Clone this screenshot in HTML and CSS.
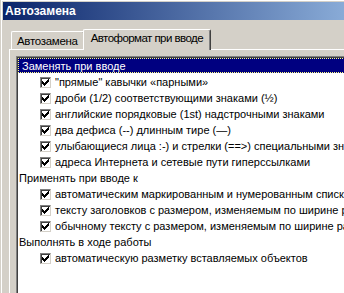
FILE: index.html
```html
<!DOCTYPE html>
<html lang="ru">
<head>
  <meta charset="UTF-8">
  <title>Автозамена</title>
  <link rel="stylesheet" href="styles.css">
</head>
<body>
  <div class="window">
    <div class="titlebar">Автозамена</div>

    <div class="tabs">
      <div class="tab">Автозамена</div>
      <div class="tab active">Автоформат при вводе</div>
    </div>

    <div class="panel">
      <div class="listbox">
        <div class="row group selected"><span class="focus">Заменять при вводе</span></div>
        <div class="row item"><span class="check"></span>"прямые" кавычки «парными»</div>
        <div class="row item"><span class="check"></span>дроби (1/2) соответствующими знаками (½)</div>
        <div class="row item"><span class="check"></span>английские порядковые (1st) надстрочными знаками</div>
        <div class="row item"><span class="check"></span>два дефиса (--) длинным тире (—)</div>
        <div class="row item"><span class="check"></span>улыбающиеся лица :-) и стрелки (==&gt;) специальными знаками</div>
        <div class="row item"><span class="check"></span>адреса Интернета и сетевые пути гиперссылками</div>
        <div class="row group">Применять при вводе к</div>
        <div class="row item"><span class="check"></span>автоматическим маркированным и нумерованным спискам</div>
        <div class="row item"><span class="check"></span>тексту заголовков с размером, изменяемым по ширине рамки</div>
        <div class="row item"><span class="check"></span>обычному тексту с размером, изменяемым по ширине рамки</div>
        <div class="row group">Выполнять в ходе работы</div>
        <div class="row item"><span class="check"></span>автоматическую разметку вставляемых объектов</div>
        <div class="row"></div>
        <div class="row"></div>
      </div>
    </div>
  </div>
</body>
</html>
```

FILE: styles.css
```css
html, body {
  margin: 0;
  width: 344px;
  height: 293px;
  overflow: hidden;
  background: #d4d0c8;
}

body {
  font-family: "Liberation Sans", Arial, sans-serif;
  font-size: 11px;
  color: #000;
}

.window {
  width: 420px;
  margin-left: 1px;
  padding: 1px;
  border-top: 1px solid #fff;
  border-left: 1px solid #fff;
}

.titlebar {
  height: 18px;
  line-height: 18px;
  padding-left: 2px;
  color: #fff;
  font-weight: bold;
  font-size: 12px;
  background: linear-gradient(to right, #0a246a, #a6caf0);
}

/* tabs */
.tabs {
  display: flex;
  align-items: flex-end;
  margin: 9px 0 0 6px;
  padding-left: 2px;
  height: 20px;
}

.tab {
  height: 17px;
  line-height: 18px;
  padding: 0 6px 0 5px;
  font-size: 11.5px;
  letter-spacing: -0.3px;
  border-top: 1px solid #fff;
  border-left: 1px solid #fff;
  border-right: 1px solid #404040;
  box-shadow: inset -1px 0 0 #808080;
  border-radius: 2px 2px 0 0;
}

.tab.active {
  position: relative;
  z-index: 1;
  height: 20px;
  line-height: 16px;
  margin: 0 0 -1px -2px;
  padding: 0 7px 0 7px;
  letter-spacing: -0.55px;
  background: #d4d0c8;
}

.panel {
  margin-left: 6px;
  padding: 6px 0 0 6px;
  border-top: 1px solid #fff;
  border-left: 1px solid #fff;
}

/* list of options */
.listbox {
  background: #fff;
  border-top: 1px solid #808080;
  border-left: 1px solid #808080;
  box-shadow: inset 1px 1px 0 #404040;
  padding: 1px 0 0 1px;
}

.row {
  height: 16px;
  display: flex;
  align-items: center;
  white-space: nowrap;
}

.group {
  padding-left: 1px;
}

.group.selected {
  height: 15px;
  margin-bottom: 1px;
  background: #000080;
  color: #fff;
  outline: 1px dotted #ffff80;
  outline-offset: -1px;
}

.group .focus {
  padding-left: 3px;
}

.item {
  padding-left: 22px;
}

.check {
  flex: none;
  width: 7px;
  height: 7px;
  margin-right: 4px;
  padding: 1px;
  border: 1px solid;
  border-color: #808080 #d4d0c8 #d4d0c8 #808080;
  box-shadow: inset 1px 1px 0 #404040;
  background: #fff url("data:image/svg+xml,%3Csvg xmlns='http://www.w3.org/2000/svg' width='7' height='7' shape-rendering='crispEdges'%3E%3Cpath d='M0 2h1v3H0zM1 3h1v3H1zM2 4h1v3H2zM3 3h1v3H3zM4 2h1v3H4zM5 1h1v3H5zM6 0h1v3H6z'/%3E%3C/svg%3E") no-repeat;
  background-origin: content-box;
}
```
